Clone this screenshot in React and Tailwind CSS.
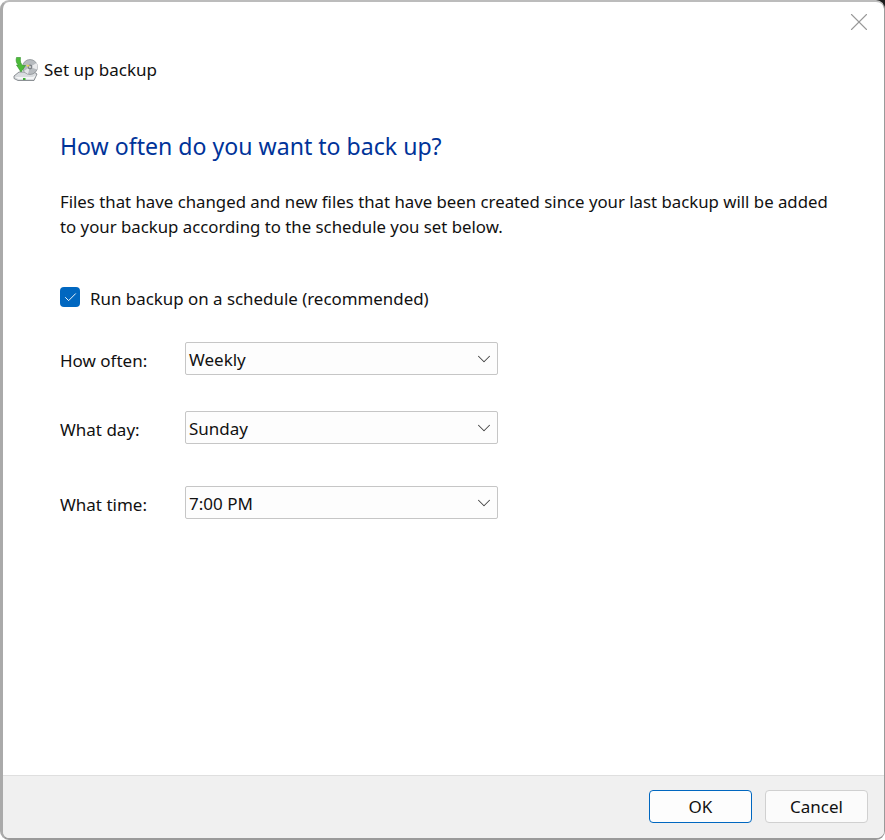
import React from "react";
import { ChevronDown, Check, X } from "lucide-react";

function BackupIcon() {
  return (
    <svg width="25" height="25" viewBox="0 0 25 25" className="shrink-0">
      <path d="M1 19 L6 15 H21 L24 17 L21 23.5 H5 L1 21.5 Z" fill="#d9dcdf" stroke="#73787d" strokeWidth="0.8" />
      <path d="M2 20 L5.5 22 H20.5 L23 18 L20 20 H6 Z" fill="#f4f5f6" />
      <circle cx="17" cy="10" r="7.5" fill="#b7bbbf" stroke="#84898e" strokeWidth="0.7" />
      <path d="M17 10 L23.5 6 A7.5 7.5 0 0 1 24 12.5 Z" fill="#e9eaec" />
      <path d="M17 10 L11 14 A7.5 7.5 0 0 0 15 17 Z" fill="#e4e6e8" />
      <circle cx="17" cy="10" r="2.4" fill="#7e8388" />
      <circle cx="17" cy="10" r="0.9" fill="#e8e8e8" />
      <path d="M13 7.5 l4 1 -2.4 1.6 Z" fill="#e8d85a" />
      <path d="M3.5 0.5 C2.5 4 3.5 6.5 5.5 8 L3.5 8 L8 15 L12.5 8.5 L9.8 8.5 C7.5 7 7 4 7.5 0.5 Z" fill="#4cbb38" stroke="#2e8f28" strokeWidth="0.6" />
      <rect x="10" y="21" width="2.5" height="2" fill="#3fae35" />
    </svg>
  );
}

function Row({ label, value, className }) {
  return (
    <div className={`flex items-center ${className}`}>
      <span className="w-[125px] pt-1 text-[17px] leading-6">{label}</span>
      <div className="flex h-[33px] w-[313px] items-center justify-between rounded-[2px] border border-[#c6c6c6] bg-[#fdfdfd] pr-[2px] pl-[3px] text-[17px] leading-6">
        <span className="pt-[2px]">{value}</span>
        <ChevronDown size={22} strokeWidth={1.15} color="#444" />
      </div>
    </div>
  );
}

export default function App() {
  return (
    <div className="relative h-[840px] w-[885px] bg-white font-['Noto_Sans','Open_Sans',sans-serif] text-[#111]">
      <div className="absolute top-0 right-0 h-3 w-3 bg-[#1c1c1c]" />
      <div className="absolute top-[590px] right-0 h-[6px] w-px bg-[#3fc43f]" />
      <div className="relative flex h-[840px] w-[885px] flex-col overflow-hidden rounded-[9px] border-t-2 border-r border-b-2 border-l-[3px] border-t-[#bcbcbc] border-r-[#9a9a9a] border-b-[#9a9a9a] border-l-[#aaaaaa] bg-white">
        <div className="flex justify-end pt-[5px] pr-[10px]">
          <X size={30} strokeWidth={0.9} color="#999" />
        </div>
        <div className="mt-[20px] flex items-center gap-[6px] pl-[10px]">
          <BackupIcon />
          <span className="text-[17px] leading-6">Set up backup</span>
        </div>
        <main className="flex-1 pl-[57px]">
          <h1 className="mt-[48px] text-[23.1px] leading-8 font-normal text-[#003399]">How often do you want to back up?</h1>
          <p className="mt-[27px] w-[780px] text-[16.8px] leading-[25px]">
            Files that have changed and new files that have been created since your last backup will be added to your backup according to the schedule you set below.
          </p>
          <div className="mt-[46px] flex items-start gap-[10px]">
            <span className="mt-[2px] flex h-5 w-5 items-center justify-center rounded-[4px] bg-[#0067c0]">
              <Check size={15} strokeWidth={1.5} color="#fff" />
            </span>
            <span className="pt-[2px] text-[16.9px] leading-6">Run backup on a schedule (recommended)</span>
          </div>
          <Row label="How often:" value="Weekly" className="mt-[31px]" />
          <Row label="What day:" value="Sunday" className="mt-[36px]" />
          <Row label="What time:" value="7:00 PM" className="mt-[42px]" />
        </main>
        <footer className="flex h-[63px] items-start justify-end gap-[13px] border-t border-[#dfdfdf] bg-[#f0f0f0] pt-[14px] pr-[16px]">
          <button className="h-[33px] w-[103px] rounded-[4px] border border-[#0067c0] bg-[#fdfdfd] text-[17px] leading-6">OK</button>
          <button className="h-[33px] w-[103px] rounded-[4px] border border-[#d0d0d0] bg-[#fbfbfb] text-[17px] leading-6">Cancel</button>
        </footer>
      </div>
    </div>
  );
}
